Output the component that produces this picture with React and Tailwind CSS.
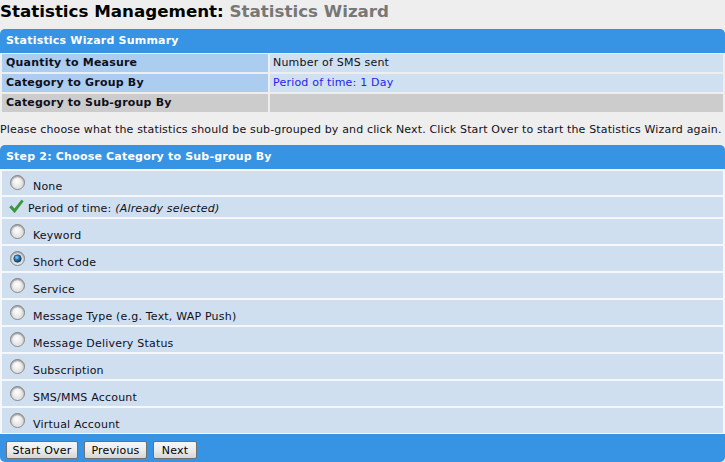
import React from "react";

function Radio({ checked }) {
  return (
    <svg width="15" height="15" viewBox="0 0 15 15" className="shrink-0">
      <defs>
        <linearGradient id="rOuter" x1="0" y1="0" x2="0" y2="1">
          <stop offset="0" stopColor="#a9a9a9" />
          <stop offset="1" stopColor="#eeeeee" />
        </linearGradient>
        <radialGradient id="rInner" cx="45%" cy="40%" r="65%">
          <stop offset="0" stopColor="#ffffff" />
          <stop offset="1" stopColor="#e0e0e0" />
        </radialGradient>
        <radialGradient id="rDot" cx="40%" cy="35%" r="70%">
          <stop offset="0" stopColor="#8fd0ff" />
          <stop offset="0.45" stopColor="#2b78b8" />
          <stop offset="1" stopColor="#0c2f52" />
        </radialGradient>
      </defs>
      <circle cx="7.5" cy="7.5" r="7" fill="url(#rOuter)" stroke="#7c7c7c" strokeWidth="0.9" />
      <circle cx="7.5" cy="7.5" r="5.2" fill="url(#rInner)" />
      {checked && <circle cx="7.5" cy="7.5" r="3.8" fill="url(#rDot)" stroke="#123a60" strokeWidth="0.6" />}
    </svg>
  );
}

function Check() {
  return (
    <svg width="15" height="15" viewBox="0 0 15 15" className="shrink-0">
      <path d="M0.6 8.2 L2.6 6.6 L5.4 10 L12.6 1 L14.3 2.3 L5.6 13.8 Z" fill="#3a9a34" stroke="#2d7d28" strokeWidth="0.5" strokeLinejoin="round" />
    </svg>
  );
}

const options = [
  { label: "None", type: "radio" },
  { label: "Period of time:", type: "check" },
  { label: "Keyword", type: "radio" },
  { label: "Short Code", type: "radio", checked: true },
  { label: "Service", type: "radio" },
  { label: "Message Type (e.g. Text, WAP Push)", type: "radio" },
  { label: "Message Delivery Status", type: "radio" },
  { label: "Subscription", type: "radio" },
  { label: "SMS/MMS Account", type: "radio" },
  { label: "Virtual Account", type: "radio" },
];

function Btn({ children, w }) {
  return (
    <div
      className={`${w} h-[18px] flex items-center justify-center rounded-[2px] border border-[#707070] bg-gradient-to-b from-[#f6f6f6] via-[#ececec] to-[#d6d6d6] text-[11px] text-black leading-none`}
    >
      {children}
    </div>
  );
}

export default function App() {
  return (
    <div className="w-[725px] min-h-[462px] bg-[#eeeeee] font-['DejaVu_Sans',Verdana,sans-serif] text-[#10101c] overflow-hidden tracking-[0.2px]">
      <div className="h-[29px] text-[16.7px] leading-[22px] font-bold whitespace-nowrap tracking-normal">
        <span className="text-black">Statistics Management: </span>
        <span className="text-[#777777]">Statistics Wizard</span>
      </div>

      <div>
        <div className="h-[24px] rounded-t-[5px] bg-[#3793e3] px-[6px] flex items-center text-[11px] font-bold text-white">
          Statistics Wizard Summary
        </div>
        <div className="grid grid-cols-[266px_1fr] gap-[2px] px-[2px] pt-[1px] text-[11px]">
          <div className="h-[18px] bg-[#aacdf0] px-[4px] flex items-center font-bold">Quantity to Measure</div>
          <div className="h-[18px] bg-[#cfe0f0] px-[3px] flex items-center">Number of SMS sent</div>
          <div className="h-[18px] bg-[#aacdf0] px-[4px] flex items-center font-bold">Category to Group By</div>
          <div className="h-[18px] bg-[#cfe0f0] px-[3px] flex items-center text-[#2424f0]">Period of time: 1 Day</div>
          <div className="h-[18px] bg-[#cccccc] px-[4px] flex items-center font-bold">Category to Sub-group By</div>
          <div className="h-[18px] bg-[#cccccc]"></div>
        </div>
      </div>

      <div className="h-[33px] pt-[11px] text-[11px] leading-[14px] whitespace-nowrap tracking-[0.15px]">
        Please choose what the statistics should be sub-grouped by and click Next. Click Start Over to start the Statistics Wizard again.
      </div>

      <div>
        <div className="h-[24px] rounded-t-[5px] bg-[#3793e3] px-[6px] flex items-center text-[11px] font-bold text-white">
          Step 2: Choose Category to Sub-group By
        </div>
        <div className="bg-[#f5f7fa] px-[2px] pt-[2px] pb-[1px] flex flex-col gap-[2px] text-[11px]">
          {options.map((o, i) =>
            o.type === "check" ? (
              <div key={i} className="h-[20px] bg-[#cfdfef] flex items-start pl-[7px]">
                <div className="mt-[2px]">
                  <Check />
                </div>
                <div className="pt-[5px] pl-[4px] leading-[14px]">
                  {o.label} <span className="italic">(Already selected)</span>
                </div>
              </div>
            ) : (
              <div key={i} className={`${i === 0 ? "h-[24px]" : "h-[25px]"} bg-[#cfdfef] flex items-start pl-[8px]`}>
                <div className={i === 0 ? "mt-[4px]" : "mt-[5px]"}>
                  <Radio checked={o.checked} />
                </div>
                <div className={`${i === 0 ? "pt-[9px]" : "pt-[10px]"} pl-[8px] leading-[14px]`}>{o.label}</div>
              </div>
            )
          )}
        </div>
        <div className="h-[28px] rounded-b-[5px] bg-[#3793e3] pl-[6px] pt-[7px] flex gap-[6px]">
          <Btn w="w-[72px]">Start Over</Btn>
          <Btn w="w-[63px]">Previous</Btn>
          <Btn w="w-[44px]">Next</Btn>
        </div>
      </div>
    </div>
  );
}
